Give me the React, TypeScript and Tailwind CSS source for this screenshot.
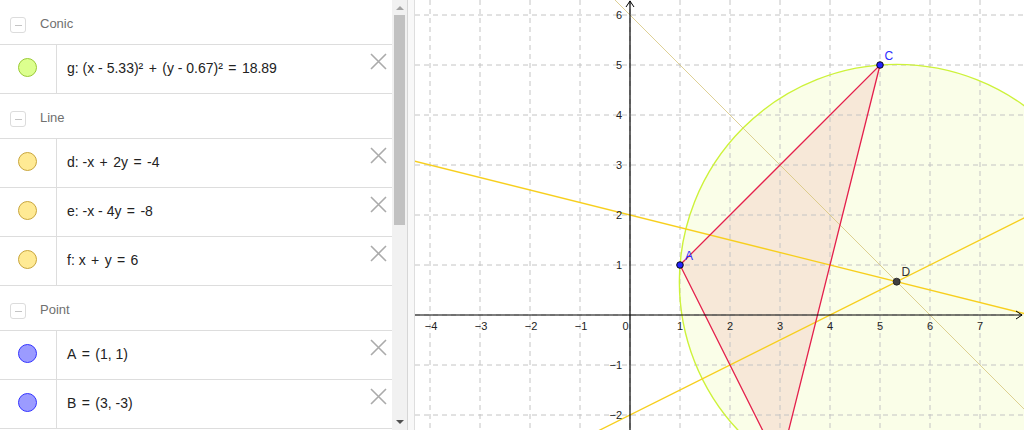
type Kind = "conic" | "line" | "point";

const dot: Record<Kind, string> = {
  conic: "bg-[#dcff8e] border-[#9acb34]",
  line: "bg-[#ffea94] border-[#c9a63c]",
  point: "bg-[#9b9bff] border-[#3434ff]",
};

const groups: { title: string; kind: Kind; items: string[] }[] = [
  { title: "Conic", kind: "conic", items: ["g: (x - 5.33)² + (y - 0.67)² = 18.89"] },
  { title: "Line", kind: "line", items: ["d: -x + 2y = -4", "e: -x - 4y = -8", "f: x + y = 6"] },
  { title: "Point", kind: "point", items: ["A = (1, 1)", "B = (3, -3)"] },
];

// math-ish spacing around + and =
function Formula({ text }: { text: string }) {
  const parts = text.split(/ ([+=]) /);
  return (
    <span className="whitespace-pre">
      {parts.map((p, i) =>
        i % 2 === 1 ? (
          <span key={i} className="mx-[1.5px]">
            {` ${p} `}
          </span>
        ) : (
          <span key={i}>{p}</span>
        )
      )}
    </span>
  );
}

function GroupHeader({ title }: { title: string }) {
  return (
    <div className="h-[44px] flex items-center shrink-0 pt-[6px]">
      <div className="ml-[10px] w-4 h-4 border border-[#dcdcdc] rounded-[3px] flex items-center justify-center">
        <div className="w-[7px] h-px bg-[#c4c4c4]" />
      </div>
      <span className="ml-[14px] mb-[3px] text-[13px] text-[#707070]">{title}</span>
    </div>
  );
}

function Row({ kind, text, last }: { kind: Kind; text: string; last: boolean }) {
  return (
    <div className={`shrink-0 flex border-t border-[#dddddd] ${last ? "border-b h-[50px]" : "h-[49px]"}`}>
      <div className="w-[57px] border-r border-[#dddddd] flex items-center justify-center pb-[3px] pr-px">
        <div className={`w-[19px] h-[19px] rounded-full border ${dot[kind]}`} />
      </div>
      <div className="flex-1 flex items-center pl-[10px] pb-[2px] text-[14px] text-[#222222]">
        <Formula text={text} />
      </div>
      <div className="w-[22px] pt-[8px]">
        <svg width="17" height="17" viewBox="0 0 17 17">
          <path d="M1 1 L16 16 M16 1 L1 16" stroke="#ababab" strokeWidth="1.6" />
        </svg>
      </div>
    </div>
  );
}

const X = (x: number) => 215 + 50 * x;
const Y = (y: number) => 315 - 50 * y;

function Graph() {
  const vLines = Array.from({ length: 13 }, (_, k) => 15 + 50 * k);
  const hLines = Array.from({ length: 9 }, (_, k) => 15 + 50 * k);
  const xLabels = [-4, -3, -2, -1, 1, 2, 3, 4, 5, 6, 7];
  const yLabels = [-2, -1, 1, 2, 3, 4, 5, 6];
  const fmt = (n: number) => (n < 0 ? `\u2212${-n}` : `${n}`);
  const cx = X(5.3333);
  const cy = Y(0.6667);
  return (
    <svg width="609" height="430" viewBox="0 0 609 430" className="block">
      <rect width="609" height="430" fill="#ffffff" />
      <circle cx={cx} cy={cy} r={217.3} fill="#fafee8" />
      <polygon points={`${X(1)},${Y(1)} ${X(3)},${Y(-3)} ${X(5)},${Y(5)}`} fill="#f7e8d8" />
      {vLines.map((x) => (
        <line key={`v${x}`} x1={x} y1={0} x2={x} y2={430} stroke="#c4c4c4" strokeDasharray="5 4" />
      ))}
      {hLines.map((y) => (
        <line key={`h${y}`} x1={0} y1={y} x2={609} y2={y} stroke="#c4c4c4" strokeDasharray="5 4" />
      ))}
      <circle cx={cx} cy={cy} r={217.3} fill="none" stroke="#cdf23a" strokeWidth="1.4" />
      {/* lines d, e, f */}
      <line x1={X(-2)} y1={Y(-3)} x2={X(10)} y2={Y(3)} stroke="#f7cf1e" strokeWidth="1.3" />
      <line x1={X(-6)} y1={Y(3.5)} x2={X(10)} y2={Y(-0.5)} stroke="#f7cf1e" strokeWidth="1.3" />
      <line x1={X(-1)} y1={Y(7)} x2={X(9)} y2={Y(-3)} stroke="#d6c47a" strokeWidth="0.8" />
      <polygon
        points={`${X(1)},${Y(1)} ${X(3)},${Y(-3)} ${X(5)},${Y(5)}`}
        fill="none"
        stroke="#e4204c"
        strokeWidth="1.3"
      />
      {/* axes */}
      <line x1={0} y1={315} x2={607} y2={315} stroke="#000" strokeWidth="1.2" />
      <path d="M601 311 L607 315 L601 319" fill="none" stroke="#000" strokeWidth="1" />
      <line x1={215} y1={430} x2={215} y2={1} stroke="#000" strokeWidth="1.2" />
      <path d="M211 7 L215 1 L219 7" fill="none" stroke="#000" strokeWidth="1" />
      <g fontFamily="'Liberation Sans', Arial, sans-serif" fontSize="11" fill="#222">
        {xLabels.map((n) => (
          <text key={`xl${n}`} x={X(n) + (n < 0 ? 1 : 0)} y={329.5} textAnchor="middle">
            {fmt(n)}
          </text>
        ))}
        <text x={210.5} y={329.5} textAnchor="middle">
          0
        </text>
        {yLabels.map((n) => (
          <text key={`yl${n}`} x={207} y={Y(n) + 4} textAnchor="end">
            {fmt(n)}
          </text>
        ))}
      </g>
      {/* points */}
      <circle cx={X(1)} cy={Y(1)} r={3.3} fill="#2323ff" stroke="#000" strokeWidth="0.9" />
      <circle cx={X(5)} cy={Y(5)} r={3.3} fill="#2323ff" stroke="#000" strokeWidth="0.9" />
      <circle cx={cx} cy={cy} r={3.5} fill="#404040" stroke="#1a1a1a" strokeWidth="0.8" />
      <g fontFamily="'Liberation Sans', Arial, sans-serif" fontSize="12">
        <text x={270} y={260} fill="#2b2bff">
          A
        </text>
        <text x={469.5} y={59.5} fill="#2b2bff">
          C
        </text>
        <text x={486.5} y={276} fill="#333333">
          D
        </text>
      </g>
    </svg>
  );
}

export default function App() {
  return (
    <div className="w-[1024px] h-[430px] flex overflow-hidden bg-white font-['Liberation_Sans',Arial,sans-serif]">
      <div className="w-[392px] h-[430px] flex flex-col overflow-hidden">
        {groups.map((g) => (
          <div key={g.title} className="flex flex-col">
            <GroupHeader title={g.title} />
            {g.items.map((t, i) => (
              <Row key={t} kind={g.kind} text={t} last={i === g.items.length - 1} />
            ))}
          </div>
        ))}
      </div>
      <div className="w-[15px] h-[430px] bg-[#f1f1f1] flex flex-col items-center">
        <div className="h-[15px] flex items-center justify-center">
          <div className="w-0 h-0 border-l-[4px] border-r-[4px] border-b-[4px] border-l-transparent border-r-transparent border-b-[#a3a3a3]" />
        </div>
        <div className="w-[11px] h-[210px] bg-[#c1c1c1]" />
        <div className="flex-1" />
        <div className="h-[15px] flex items-center justify-center pb-[2px]">
          <div className="w-0 h-0 border-l-[4px] border-r-[4px] border-t-[4px] border-l-transparent border-r-transparent border-t-[#505050]" />
        </div>
      </div>
      <div className="w-px bg-[#d6d6d6]" />
      <div className="w-[6px] bg-[#f8f8f8]" />
      <div className="w-px bg-[#dedede]" />
      <Graph />
    </div>
  );
}
